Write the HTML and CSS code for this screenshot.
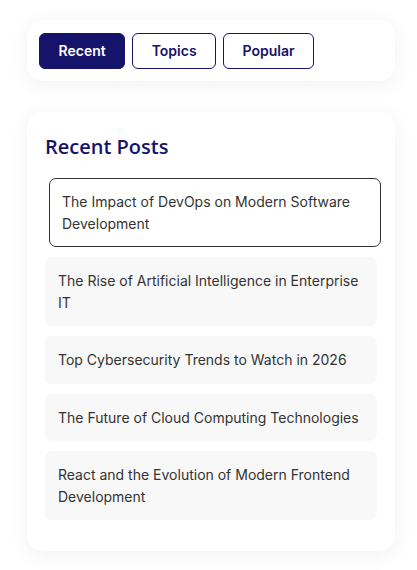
FILE: index.html
```html
<!DOCTYPE html>
<html lang="en">
<head>
<meta charset="utf-8">
<title>Sidebar</title>
<link rel="stylesheet" href="styles.css">
</head>
<body>
<aside class="sidebar">
  <section class="card tabs-card">
    <div class="tabs">
      <button class="tab active">Recent</button>
      <button class="tab">Topics</button>
      <button class="tab">Popular</button>
    </div>
  </section>
  <section class="card posts-card">
    <h3 class="posts-title">Recent Posts</h3>
    <ul class="post-list">
      <li class="post-item hovered">The Impact of DevOps on Modern Software Development</li>
      <li class="post-item">The Rise of Artificial Intelligence in Enterprise IT</li>
      <li class="post-item">Top Cybersecurity Trends to Watch in 2026</li>
      <li class="post-item">The Future of Cloud Computing Technologies</li>
      <li class="post-item">React and the Evolution of Modern Frontend Development</li>
    </ul>
  </section>
  <section class="card next-card"></section>
</aside>
</body>
</html>
```
FILE: styles.css
```css
html, body {
  margin: 0;
  padding: 0;
  background: #ffffff;
}
body {
  font-family: Inter, "Liberation Sans", sans-serif;
}
.sidebar {
  display: flex;
  flex-direction: column;
  gap: 31px;
  padding: 20px 22px 0 27px;
}
.card {
  background: #ffffff;
  border-radius: 16px;
  box-shadow: 0 4px 22px rgba(0, 0, 0, 0.06);
}
.tabs-card {
  padding: 13px 12px 12px;
}
.tabs {
  display: flex;
  gap: 7px;
}
.tab {
  font-family: Inter, "Liberation Sans", sans-serif;
  font-size: 14px;
  font-weight: 600;
  line-height: 18px;
  padding: 8px 18.5px;
  border: 1px solid #16136a;
  border-radius: 6px;
  background: #ffffff;
  color: #16136a;
  cursor: pointer;
}
.tab.active {
  background: #16136a;
  color: #ffffff;
}
.posts-card {
  padding: 18px 18px 31px;
}
.posts-title {
  margin: 3px 0 18px;
  font-family: "Open Sans", "Noto Sans", sans-serif;
  font-weight: 600;
  font-size: 20px;
  line-height: 27px;
  color: #16136a;
}
.post-list {
  list-style: none;
  margin: 0;
  padding: 0;
  display: flex;
  flex-direction: column;
  gap: 10px;
}
.post-item {
  background: #f8f8f8;
  border: 1px solid transparent;
  border-radius: 7px;
  padding: 12px;
  font-size: 14px;
  line-height: 21.5px;
  color: #333333;
}
.post-item.hovered {
  background: #ffffff;
  border-color: #333333;
  transform: translateX(4px);
}
.next-card {
  height: 60px;
}
```
